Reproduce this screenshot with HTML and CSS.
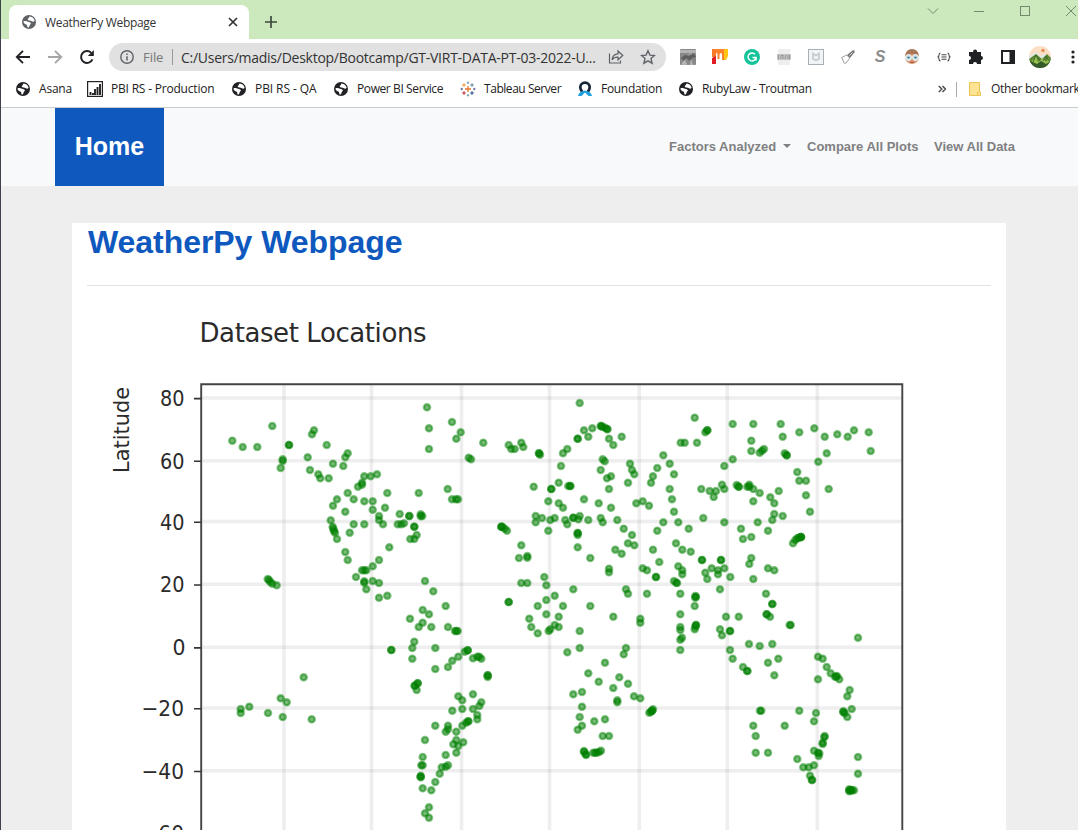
FILE: index.html
```html
<!DOCTYPE html>
<html lang="en">
<head>
<meta charset="utf-8">
<title>WeatherPy Webpage</title>
<link rel="stylesheet" href="styles.css">
</head>
<body>
<svg class="defs" width="0" height="0">
  <symbol id="globe" viewBox="0 0 14 14">
    <circle cx="7" cy="7" r="7" fill="currentColor"/>
    <path d="M1.500 6.200c1.800-.3 3.500-.2 4.500.5 1 .7 2.700.3 2.900 1.600.1 1-1 1.200-1.300 2.100-.3.900-.6 2.300-1.900 2.200-.700-1.500-.100-2.600-1.500-3.200C2.500 8.900 1.500 7.900 1.500 6.200z" fill="#fff"/>
    <path d="M7.200 1.500c1 .3 2.400.3 3.500 1.100.900.700 1.600 2 1.900 3.200-.900 1.200-1.900 1-2.700.4C9.200 5.500 8 5.900 6.900 5.400 5.700 4.900 5.200 4.200 6.200 3.600c.8-.5.900-1.100 1-2.100z" fill="#fff"/>
  </symbol>
</svg>
<div class="window">
  <div class="tabstrip">
    <div class="tab">
      <svg class="globe gray"><use href="#globe"/></svg>
      <span class="tab-title">WeatherPy Webpage</span>
      <svg class="tab-close" viewBox="0 0 10 10"><path d="M1 1l8 8M9 1l-8 8" stroke="#303336" stroke-width="1.7"/></svg>
    </div>
    <svg class="newtab" viewBox="0 0 12 12"><path d="M6 0v12M0 6h12" stroke="#3f4a3e" stroke-width="1.7"/></svg>
    <div class="controls">
      <svg viewBox="0 0 12 12"><path d="M1 3.500l5 5 5-5"/></svg>
      <svg viewBox="0 0 12 12"><path d="M1 6.500h10"/></svg>
      <svg viewBox="0 0 12 12"><rect x="1.500" y="1.500" width="9" height="9"/></svg>
      <svg viewBox="0 0 12 12"><path d="M1 1l10 10M11 1L1 11"/></svg>
    </div>
  </div>

  <div class="toolbar">
    <div class="slot"><svg width="16" height="16" viewBox="0 0 16 16" fill="none" stroke="#202124" stroke-width="1.900"><path d="M15 8H2M8 1.800L1.800 8 8 14.200"/></svg></div>
    <div class="slot"><svg width="16" height="16" viewBox="0 0 16 16" fill="none" stroke="#a5a5a5" stroke-width="1.900"><path d="M1 8h13M8 1.800L14.200 8 8 14.200"/></svg></div>
    <div class="slot"><svg width="16" height="16" viewBox="0 0 16 16"><path d="M13.400 10.300A5.900 5.900 0 1 1 12.200 3.900" fill="none" stroke="#202124" stroke-width="2"/><path d="M14.800 1v6H8.800z" fill="#202124"/></svg></div>
    <div class="omnibox">
      <svg class="info" viewBox="0 0 14 14"><circle cx="7" cy="7" r="6.200" fill="none" stroke="#5f6368" stroke-width="1.400"/><path d="M7 6.200v4.300M7 3.500v1.600" stroke="#5f6368" stroke-width="1.500"/></svg>
      <span class="scheme">File</span>
      <span class="divider"></span>
      <span class="url">C:/Users/madis/Desktop/Bootcamp/GT-VIRT-DATA-PT-03-2022-U...</span>
      <svg class="share" viewBox="0 0 16 16" fill="none" stroke="#5f6368" stroke-width="1.200"><path d="M1.500 4.500v9.500h11v-2.500"/><path d="M4 10.800c.5-4 2.800-5.800 6-5.900V2l4.800 4.500-4.800 4.300V8.200c-3-.100-4.700.7-6 2.600z"/></svg>
      <svg class="star" viewBox="0 0 16 16" fill="none" stroke="#5f6368" stroke-width="1.400"><path d="M8 1.800l1.900 4.300 4.600.4-3.500 3.100 1.100 4.600L8 11.800l-4.100 2.400L5 9.600 1.500 6.500l4.600-.4z"/></svg>
    </div>
    <div class="slot"><svg width="16" height="16" viewBox="0 0 16 16"><rect width="16" height="16" rx="1" fill="#888"/><path d="M0 1h16v3H0z" fill="#b4b4b4"/><path d="M1 9l4-3 4 1 4-3 3 4-4 1-2 3-4-3-2 3z" fill="#5e5e5e"/><path d="M2 14l3-3 2 5H2M10 16l1-5 2 5M8 3l2 3M13 2l-2 4" fill="#b6b6b6" stroke="#aaa"/></svg></div>
    <div class="slot"><svg width="16" height="16" viewBox="0 0 16 16"><path d="M0 0h4v8H0z" fill="#f9782a"/><path d="M0 9l4-2v8H0z" fill="#e21c25"/><path d="M3 0h10v11h-3V6Q10 4 8.800 4T7.500 6v4h-2V5Q5.500 4 4 4H3z" fill="#fb822b"/><path d="M12 0h4v7l-2 4h-2z" fill="#ffc414"/></svg></div>
    <div class="slot"><svg width="16" height="16" viewBox="0 0 16 16"><circle cx="8" cy="8" r="8" fill="#15c39a"/><path d="M11 5.200A4 4 0 1 0 12 8.500H8.500M12 8.500v3" fill="none" stroke="#fff" stroke-width="1.500"/></svg></div>
    <div class="slot"><svg width="14" height="16" viewBox="0 0 14 16"><path d="M1 0h12v16H1z" fill="#eee"/><path d="M0 5h14v6H0z" fill="#c4c4c4"/><path d="M1.500 6v4M4 6v4M4 6.500h2M6 6v4M9 6l-1 4M11 6v4M12.500 6v4" stroke="#999"/></svg></div>
    <div class="slot"><svg width="16" height="16" viewBox="0 0 16 16"><rect x=".5" y=".5" width="15" height="15" fill="#f1f4f5" stroke="#a9b0b5"/><path d="M5 4.500L8 6.500l3-2V10L8 11.500 5 10z" fill="none" stroke="#c0c8cc" stroke-width="1.500"/></svg></div>
    <div class="slot"><svg width="14" height="14" viewBox="0 0 14 14"><path d="M.7 7.500l5-2.500 3 3-3.500 5-2 .3z" fill="#fff" stroke="#a0a0a0"/><path d="M6 5l5.500-4.500 2-.2v2L9 8z" fill="#777"/><path d="M8.500 5.500l3-3" stroke="#ddd"/></svg></div>
    <div class="slot ext-s">S</div>
    <div class="slot"><svg width="16" height="16" viewBox="0 0 16 16"><circle cx="8" cy="8" r="7" fill="#d89b74"/><path d="M1 7Q2 0 8 0t7 7Q9 3 1 7z" fill="#a77853"/><circle cx="4.500" cy="8.500" r="3" fill="#c7e5ee" stroke="#eee"/><circle cx="11.500" cy="8.500" r="3" fill="#c7e5ee" stroke="#eee"/><path d="M3.500 8.500h2M10.500 8.500h2" stroke="#35556b" stroke-width="1.500"/><path d="M6 13q2 1 4 0" stroke="#a64e3c" fill="none"/></svg></div>
    <div class="slot"><svg width="14" height="10" viewBox="0 0 14 10" fill="none" stroke="#444" stroke-width="1.100"><path d="M3.500 1Q2 1 2 3q0 2-1.500 2Q2 5 2 7q0 2 1.500 2M10.500 1Q12 1 12 3q0 2 1.500 2Q12 5 12 7q0 2-1.500 2"/><path d="M4.500 2.800h5M4.500 5h5M4.500 7.200h5"/></svg></div>
    <div class="slot"><svg width="16" height="16" viewBox="0 0 16 16"><path d="M1 3h4.200a2 2 0 1 1 3.800 0H13v4a2 2 0 1 1 0 4v4H9a2 2 0 0 0-4 0H1v-4a2 2 0 0 0 0-4z" fill="#202124"/></svg></div>
    <div class="slot"><svg width="14" height="14" viewBox="0 0 14 14"><path fill-rule="evenodd" d="M0 0h14v14H0zM2 2v10h6.500V2z" fill="#202124"/></svg></div>
    <div class="slot"><svg width="22" height="22" viewBox="0 0 22 22"><clipPath id="face"><circle cx="11" cy="11" r="11"/></clipPath><g clip-path="url(#face)"><path d="M0 0h22v22H0z" fill="#fbdfc4"/><circle cx="14" cy="4.500" r="1.800" fill="#e79160"/><path d="M0 10l7-4 4 4 4-2 7 3v11H0z" fill="#dfe8e5"/><path d="M0 13l7-5 6 5 5-5 4 4v10H0z" fill="#5c8534"/><path d="M2 16l5-6 2 6 5-4 3 4 3-4v8l-8 2z" fill="#98bf50"/><path d="M7 9l-3 7M7 9l4 6M17 10l-3 5M17 10l3 5" stroke="#3e6a2b"/><path d="M1 15l7 3 4-3 5 3 5-3v7H0z" fill="#34592a"/></g></svg></div>
    <div class="slot menu"><svg width="4" height="14" viewBox="0 0 4 14" fill="#202124"><circle cx="2" cy="2" r="1.600"/><circle cx="2" cy="7" r="1.600"/><circle cx="2" cy="12" r="1.600"/></svg></div>
  </div>

  <div class="bookmarks">
    <div class="bm bm-asana"><svg class="globe"><use href="#globe"/></svg><span>Asana</span></div>
    <div class="bm bm-prod"><svg width="16" height="16" viewBox="0 0 16 16"><rect x=".6" y=".6" width="14.800" height="14.800" fill="#fff" stroke="#222" stroke-width="1.200"/><path d="M3.500 14v-3M6 14v-2M8 14V8M10.500 14V6M13 14V3" stroke="#222" stroke-width="1.900"/></svg><span>PBI RS - Production</span></div>
    <div class="bm bm-qa"><svg class="globe"><use href="#globe"/></svg><span>PBI RS - QA</span></div>
    <div class="bm bm-power"><svg class="globe"><use href="#globe"/></svg><span>Power BI Service</span></div>
    <div class="bm bm-tableau"><svg width="16" height="16" viewBox="0 0 16 16" fill="none" stroke-width="1"><path d="M8 5v6M5 8h6" stroke="#e8762c" stroke-width="1.300"/><path d="M4 2.200v3.600M2.200 4h3.600" stroke="#eb9129"/><path d="M12 2.200v3.600M10.200 4h3.600" stroke="#59879b"/><path d="M4 10.200v3.600M2.200 12h3.600" stroke="#c72035"/><path d="M12 10.200v3.600M10.200 12h3.600" stroke="#1f457e"/><path d="M8 .5v2.500M6.800 1.700h2.400M8 13v2.500M6.800 14.300h2.400" stroke="#7199a6"/><path d="M1.700 6.800v2.400M.5 8h2.500M14.300 6.800v2.400M13 8h2.500" stroke="#5b6591"/></svg><span>Tableau Server</span></div>
    <div class="bm bm-found"><svg width="14" height="16" viewBox="0 0 14 16"><path d="M4.300 11Q2.300 9 2.300 6.300a4.700 4.700 0 0 1 9.400 0Q11.700 9 9.700 11" fill="none" stroke="#152536" stroke-width="2.700"/><path d="M0 15q1-4 4-4.500L7 9.500l3 1Q13 11 14 15h-3.500L7 11.500 3.500 15z" fill="#1fa1df"/></svg><span>Foundation</span></div>
    <div class="bm bm-ruby"><svg class="globe"><use href="#globe"/></svg><span>RubyLaw - Troutman</span></div>
    <svg class="more" viewBox="0 0 8 8" fill="none" stroke="#4a4d50" stroke-width="1.500"><path d="M.8 1l3 3-3 3M4.500 1l3 3-3 3"/></svg>
    <span class="bm-divider"></span>
    <div class="bm bm-other"><svg width="12" height="14" viewBox="0 0 12 14"><path d="M.5.5h10v9l1 .5v3.500H.5z" fill="#ffe394" stroke="#eac451"/><path d="M8.500 13.500V10h2" fill="none" stroke="#eac451"/></svg><span>Other bookmark</span></div>
  </div>

  <div class="page">
    <nav class="navbar">
      <a class="brand">Home</a>
      <div class="links">
        <a class="factors">Factors Analyzed<i class="caret"></i></a>
        <a class="compare">Compare All Plots</a>
        <a class="data">View All Data</a>
      </div>
    </nav>
    <main class="card">
      <h1>WeatherPy Webpage</h1>
      <hr>
      <svg class="chart" viewBox="87 286 904 544" role="img">
        <g class="grid">
          <path d="M284 385V830M371.500 385V830M461.500 385V830M549.500 385V830M639.300 385V830M727.300 385V830M817.300 385V830"/>
          <path d="M202 398H902M202 460.800H902M202 521.600H902M202 584.300H902M202 647.300H902M202 708H902M202 770.800H902"/>
        </g>
        <g id="points" class="points"></g>
        <path class="frame" d="M201.200 831V384.200H902.300V831"/>
        <path class="ticks" d="M194 398.600h7M194 461.300h7M194 522.300h7M194 585h7M194 647.900h7M194 708.700h7M194 771.500h7"/>
        <g class="labels">
          <text class="title" x="199.500" y="341.500" textLength="227">Dataset Locations</text>
          <text transform="translate(129 473) rotate(-90)" textLength="86" lengthAdjust="spacingAndGlyphs">Latitude</text>
          <text x="160" y="405.500" textLength="24.500" lengthAdjust="spacingAndGlyphs">80</text>
          <text x="160" y="468.500" textLength="24.500" lengthAdjust="spacingAndGlyphs">60</text>
          <text x="160" y="529.500" textLength="24.500" lengthAdjust="spacingAndGlyphs">40</text>
          <text x="160" y="592" textLength="24.500" lengthAdjust="spacingAndGlyphs">20</text>
          <text x="172.500" y="655" textLength="13" lengthAdjust="spacingAndGlyphs">0</text>
          <text x="141.500" y="716" textLength="42.500" lengthAdjust="spacingAndGlyphs">−20</text>
          <text x="141.500" y="778.500" textLength="42.500" lengthAdjust="spacingAndGlyphs">−40</text>
          <text x="141.500" y="841" textLength="42.500" lengthAdjust="spacingAndGlyphs">−60</text>
        </g>
      </svg>
    </main>
  </div>
</div>
<script src="points.js"></script>
</body>
</html>
```
FILE: styles.css
```css
* { box-sizing: border-box; }
body { margin: 0; height: 830px; overflow: hidden; background: #3f424b; font-family: "Open Sans", "Noto Sans", sans-serif; }
svg { display: block; flex: none; }
.defs { position: absolute; }
.window { height: 830px; margin-left: 1px; display: flex; flex-direction: column; background: #fff; }
.globe { width: 14px; height: 14px; color: #202124; }
.globe.gray { color: #5f6368; }

.tabstrip { height: 39px; flex: none; display: flex; background: #cbe9bd; }
.tab { width: 240px; height: 34px; margin: 5px 0 0 8px; padding: 0 11px 0 13px; display: flex; align-items: center; background: #fff; border-radius: 8px 8px 0 0; }
.tab-title { margin-left: 9px; flex: 1; font-size: 12px; letter-spacing: -.33px; color: #333; white-space: nowrap; }
.tab-close { width: 10px; height: 10px; }
.newtab { width: 12px; height: 12px; margin: 16px 0 0 16px; }
.controls { margin: 5px 0 0 650px; display: flex; gap: 34px; }
.controls svg { width: 12px; height: 12px; fill: none; stroke: #748a6e; }

.toolbar { height: 36px; flex: none; display: flex; align-items: center; padding-left: 6px; }
.slot { width: 32px; flex: none; display: flex; justify-content: center; }
.slot.menu { width: 34px; }
.ext-s { font: italic bold 16px/18px "Liberation Sans", sans-serif; color: #8c8c8c; }
.omnibox { width: 557px; height: 28px; margin: 0 6px; padding-left: 11px; flex: none; display: flex; align-items: center; background: #e1e1e1; border-radius: 14px; }
.info { width: 14px; height: 14px; }
.scheme { width: 29px; margin-left: 9px; font-size: 13px; letter-spacing: -.05px; color: #777; }
.divider { width: 1px; height: 16px; background: #999; }
.url { width: 427px; margin-left: 8px; font-size: 14px; letter-spacing: -.26px; color: #333; white-space: nowrap; }
.share { width: 16px; height: 16px; }
.star { width: 16px; height: 16px; margin-left: 16px; }

.bookmarks { height: 33px; flex: none; display: flex; align-items: center; padding: 0 0 4px 15px; border-bottom: 1px solid #c9cccd; font-size: 12px; color: #222; overflow: hidden; }
.bm { flex: none; display: flex; align-items: center; white-space: nowrap; letter-spacing: -.2px; }
.bm span { margin-top: -1px; }
.bm-asana { width: 71px; gap: 9px; }
.bm-prod { width: 145px; gap: 8px; }
.bm-qa { width: 102px; gap: 9px; letter-spacing: -.08px; }
.bm-power { width: 126px; gap: 9px; letter-spacing: -.4px; }
.bm-tableau { width: 118px; gap: 8px; letter-spacing: -.45px; }
.bm-found { width: 101px; gap: 9px; letter-spacing: -.3px; }
.bm-ruby { width: 259px; gap: 9px; letter-spacing: -.35px; }
.more { width: 8px; height: 8px; }
.bm-divider { width: 1px; height: 15px; margin: 0 12px 0 10px; flex: none; background: #aaa; }
.bm-other { gap: 10px; letter-spacing: -.3px; }

.page { flex: 1; min-height: 0; display: flex; flex-direction: column; background: #eee; font-family: "Liberation Sans", Arial, sans-serif; }
.navbar { height: 78px; flex: none; padding: 0 64px 0 54px; display: flex; justify-content: space-between; align-items: center; background: #f8f9fb; }
.brand { width: 109px; height: 78px; padding-bottom: 2px; display: flex; align-items: center; justify-content: center; background: #0f59be; color: #fff; font-size: 25px; font-weight: bold; }
.links { padding-bottom: 2px; display: flex; font-size: 13px; font-weight: bold; color: #7f8081; white-space: nowrap; }
.factors { width: 138px; display: flex; align-items: center; }
.compare { width: 127px; }
.data { width: 80px; }
.caret { margin-left: 7px; border: 4px solid transparent; border-top-color: #7f8081; border-bottom: 0; }
.card { width: 934px; height: 607px; margin: 37px 0 0 71px; padding: 0 15px; background: #fff; overflow: hidden; }
h1 { margin: 0; height: 62px; padding: 1px 0 0 1px; font-size: 32px; line-height: 37px; letter-spacing: -.05px; color: #0f59be; }
hr { margin: 0; border: 0; height: 1px; background: #e3e3e3; }
.chart { width: 904px; height: 544px; }
.grid { fill: none; stroke: #b0b0b0; stroke-opacity: .22; stroke-width: 3.500; }
.frame { fill: none; stroke: #444; stroke-width: 1.900; }
.ticks { fill: none; stroke: #333; stroke-width: 1.600; }
.points { fill: green; fill-opacity: .54; stroke: green; stroke-opacity: .48; stroke-width: 2.400; }
.labels { font: 22px "DejaVu Sans", sans-serif; fill: #2b2b2b; }
.labels .title { font-size: 26px; }
```
FILE: points.js
```js
// City markers grouped by map region: origin x, origin y, then offsets in thirds of a pixel.
const regions = [
  [190, 380, "127 182 158 201 202 201 247 138 297 195 297 195 278 238 278 243 272 264 372 151 366 163 410 195 353 232 360 270 385 283 391 295 416 295 429 251 460 258 466 232 473 220 523 289 516 308 516 314 504 320 473 339 441 358 429 377 491 358 523 364 466 395 422 421 428 440 430 446 432 453 435 458 441 477 491 433 523 433 479 458 466 516 473 540 516 571 523 571 498 591 523 604 523 608 529 628 233 597 237 600 241 606 247 611 260 616"],
  [360, 380, "32 289 51 283 38 364 38 389 82 339 75 383 57 408 57 420 69 433 176 339 201 82 207 145 207 207 276 126 302 157 289 176 370 188 326 233 333 238 446 195 454 207 464 207 484 188 490 201 263 327 276 358 288 358 294 358 119 402 148 408 148 408 182 403 182 409 187 408 113 433 124 433 132 430 163 440 163 440 170 465 151 477 163 477 88 502 57 540 38 559 19 571 38 603 57 609 57 653 82 647 195 603 220 634 424 440 424 440 427 440 434 446 441 452 484 496 477 534 502 528 502 533 484 609 502 609 446 666 446 666"],
  [530, 380, "17 408 36 414 17 427 149 69 162 151 187 145 175 170 143 176 143 176 212 138 214 138 217 140 225 143 232 147 232 148 237 176 250 195 275 170 112 207 99 220 27 220 27 220 30 224 93 258 218 238 224 244 212 270 231 295 243 289 237 327 86 308 64 327 64 327 115 318 121 318 121 318 11 320 55 364 86 370 99 383 162 358 206 370 243 383 294 308 300 251 306 270 313 283 319 370 338 364 357 377 363 308 369 289 382 264 400 226 419 251 432 283 419 327 426 358 432 395 452 188 464 188 501 188 494 113 526 157 532 151 532 151 514 327 539 333 551 351 520 414 74 414 61 420 106 420 112 433 55 452 130 413 130 413 145 418 149 408 175 420 212 414 218 427 262 420 281 446 306 465 143 459 143 459 143 465 143 502 181 534 256 509 275 521 294 490 313 496 237 566 237 577 338 565 351 571 378 591 378 591 369 509 382 452 400 427 445 427 476 446 438 490 457 509 482 515 388 546 445 559 457 571 457 583 432 603 441 609 439 608 451 641 351 641 288 628 294 641 516 540 516 540 526 578 532 597 545 565 43 591 49 616 74 647 49 660 130 628 496 648 496 653 498 650"],
  [710, 380, "68 132 130 132 212 132 218 170 124 182 124 213 149 218 156 212 162 207 68 238 43 258 268 157 313 145 344 170 382 163 413 170 432 151 476 157 482 213 350 220 325 245 224 220 230 226 230 226 262 276 268 302 288 302 288 346 300 395 356 327 18 333 36 314 43 327 80 315 86 320 86 320 112 320 118 314 118 320 130 327 149 339 130 364 206 333 181 352 193 370 193 402 187 420 218 408 174 452 143 427 43 427 93 446 99 477 124 471 249 490 256 480 262 475 266 473 273 471 273 471 273 471 33 540 33 540 124 534 118 552 174 565 193 571 130 597 61 591 43 565 24 571 24 583 30 628 168 641 187 672 187 672"],
  [190, 600, "767 18 698 30 717 43 660 56 698 68 686 81 724 81 774 81 795 93 803 93 799 93 673 125 667 144 667 176 736 144 736 207 604 150 604 150 341 232 272 295 290 307 278 351 234 339 178 320 152 327 152 339 365 358 683 250 683 250 674 257 674 257 680 270 774 201 787 182 805 170 824 155 833 151 833 151 849 175 862 170 868 170 874 176 893 226 893 226 893 231 849 283 805 289 817 301 817 327 787 332 849 327 868 318 874 307 862 345 862 358 736 377 774 377 774 388 767 395 817 377 828 368 835 364 835 364 799 395 705 420 799 420 790 433 805 438 820 427 799 458 767 465 698 471 694 496 698 496 692 527 692 532 692 530 774 496 767 500 755 502 749 521 736 546 724 571 698 565 717 622 705 640 717 653 1018 56 1024 81"],
  [530, 600, "23 18 99 18 181 18 49 43 86 50 74 75 86 81 61 88 56 93 23 100 149 93 250 50 331 56 331 68 149 144 112 157 288 144 281 163 225 188 175 220 206 245 268 232 294 251 250 264 130 283 156 276 156 320 312 289 331 295 262 301 262 307 149 351 193 364 225 358 156 377 143 389 218 408 237 408 162 453 162 456 168 465 168 463 190 458 200 458 196 458 207 456 213 452 358 338 362 336 366 332 366 332 369 328 451 43 451 81 451 90 456 113 451 119 451 150 494 18 498 75 498 75 494 88 496 80 570 88 576 106 600 93 600 93 588 50 626 50 710 43 710 43 720 50 779 75 782 75 600 150 608 176 639 201 652 213 652 213 657 132 689 138 727 132 745 176 714 188 733 226 690 332 694 332 670 377 677 408 677 458 714 458 764 377 808 332 858 339 852 364 802 477 820 502 836 502 852 496 840 527 846 540 846 540 883 412 884 408 878 428 878 432 852 452 864 458 868 460 866 468 984 113 864 170 878 176 890 201 902 220 915 230 921 228 919 230 928 238 864 238 959 270 952 289 965 327 940 334 940 336 944 340 952 351 984 471 984 521 958 571 958 568 958 574 964 571 966 571 972 571"]
];
const layer = document.getElementById("points");
for (const [ox, oy, list] of regions) {
  const v = list.split(" ").map(Number);
  for (let i = 0; i < v.length; i += 2) {
    const c = document.createElementNS("http://www.w3.org/2000/svg", "circle");
    c.setAttribute("cx", (ox + v[i] / 3).toFixed(1));
    c.setAttribute("cy", (oy + v[i + 1] / 3).toFixed(1));
    c.setAttribute("r", 3.1);
    layer.appendChild(c);
  }
}
```
